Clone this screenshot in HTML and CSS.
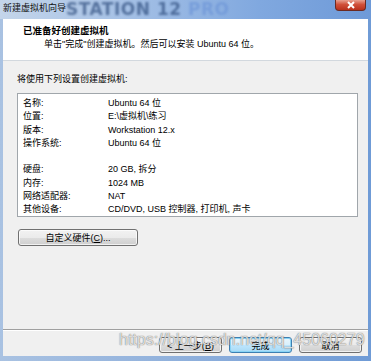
FILE: index.html
```html
<!DOCTYPE html>
<html lang="zh-CN">
<head>
<meta charset="utf-8">
<title>新建虚拟机向导</title>
<link rel="stylesheet" href="styles.css">
</head>
<body>
<div class="window">
  <div class="titlebar">
    <span class="brand"><span class="brand-dark">STATION 12</span> <span class="brand-light">PRO</span></span>
    <span class="title">新建虚拟机向导</span>
    <span class="close"><svg width="10" height="8" viewBox="0 0 10 8"><path d="M2 1 L8 7 M8 1 L2 7" stroke="#fff" stroke-width="2" fill="none"/></svg></span>
  </div>
  <div class="client">
    <div class="header">
      <div class="h-title">已准备好创建虚拟机</div>
      <div class="h-sub">单击"完成"创建虚拟机。然后可以安装 Ubuntu 64 位。</div>
    </div>
    <div class="main">
      <div class="intro">将使用下列设置创建虚拟机:</div>
      <div class="list">
        <div class="row"><span class="k">名称:</span><span class="v">Ubuntu 64 位</span></div>
        <div class="row"><span class="k">位置:</span><span class="v">E:\虚拟机\练习</span></div>
        <div class="row"><span class="k">版本:</span><span class="v">Workstation 12.x</span></div>
        <div class="row"><span class="k">操作系统:</span><span class="v">Ubuntu 64 位</span></div>
        <div class="row blank"></div>
        <div class="row"><span class="k">硬盘:</span><span class="v">20 GB, 拆分</span></div>
        <div class="row"><span class="k">内存:</span><span class="v">1024 MB</span></div>
        <div class="row"><span class="k">网络适配器:</span><span class="v">NAT</span></div>
        <div class="row"><span class="k">其他设备:</span><span class="v">CD/DVD, USB 控制器, 打印机, 声卡</span></div>
      </div>
      <button class="btn btn-custom">自定义硬件(<u>C</u>)...</button>
    </div>
    <div class="footer">
      <button class="btn">&lt; 上一步(<u>B</u>)</button>
      <button class="btn btn-default">完成</button>
      <button class="btn">取消</button>
      <span class="watermark">https://blog.csdn.net/qq_45060279</span>
    </div>
  </div>
</div>
</body>
</html>
```

FILE: styles.css
```css
* { box-sizing: border-box; }
html, body { margin: 0; padding: 0; }
body {
  width: 371px;
  height: 361px;
  overflow: hidden;
  font-family: "Liberation Sans", "Noto Sans CJK SC", sans-serif;
  font-size: 9px;
  color: #000;
}
.window {
  width: 371px;
  height: 361px;
  display: flex;
  flex-direction: column;
  background: linear-gradient(90deg, #a9c2e2 0%, #8fb0dc 50%, #6f9bd6 100%);
}
.titlebar {
  position: relative;
  height: 19px;
  flex: none;
  display: flex;
  align-items: center;
  padding-left: 3px;
  background: linear-gradient(90deg, #c4d5ea 0%, #a9c3e6 30%, #80a8df 70%, #6e9ad8 100%);
  overflow: hidden;
}
.title {
  position: relative;
  font-size: 9px;
  color: #111;
  margin-top: -5px;
}
.brand {
  position: absolute;
  left: 66px;
  top: -1px;
  font-family: "DejaVu Sans", sans-serif;
  font-weight: bold;
  font-size: 17px;
  letter-spacing: 0.5px;
  white-space: nowrap;
  filter: blur(1.2px);
}
.brand-dark { color: rgba(40, 70, 120, 0.65); }
.brand-light { color: rgba(110, 150, 215, 0.7); }
.close {
  position: absolute;
  right: 5px;
  top: 0;
  width: 31px;
  height: 11px;
  display: flex;
  align-items: center;
  justify-content: center;
  background: linear-gradient(180deg, #e8a090 0%, #d0503a 45%, #b8301c 100%);
  border: 1px solid #6b2a22;
  border-top: none;
  border-radius: 0 0 4px 4px;
}
.client {
  flex: 1;
  margin: 0 3px 5px 3px;
  background: #f0f0f0;
  display: flex;
  flex-direction: column;
}
.header {
  height: 42px;
  flex: none;
  background: #fff;
  border-bottom: 1px solid #d2d8de;
  padding: 6px 0 0 20px;
}
.h-title {
  font-weight: bold;
  font-size: 9.5px;
  line-height: 11px;
}
.h-sub {
  padding-left: 21px;
  margin-top: 3px;
  line-height: 11px;
}
.main {
  flex: 1;
  padding: 12px 10px 0 14px;
}
.intro {
  line-height: 12px;
}
.list {
  margin-top: 8px;
  width: 341px;
  height: 124px;
  border: 1px solid #a0a6ab;
  background: #fff;
  padding: 3px 0 0 5px;
}
.row {
  display: flex;
  height: 13.25px;
  line-height: 13.25px;
  white-space: nowrap;
}
.k { width: 85px; flex: none; }
.v { color: #000; }
.btn {
  font-family: inherit;
  font-size: 9px;
  color: #000;
  height: 16px;
  padding: 0;
  border: 1px solid #707070;
  border-radius: 3px;
  background: linear-gradient(180deg, #f2f2f2 0%, #ebebeb 50%, #dddddd 51%, #cfcfcf 100%);
  box-shadow: inset 0 0 0 1px rgba(255,255,255,0.7);
}
.btn-custom {
  margin-top: 12px;
  margin-left: 1px;
  width: 120px;
  height: 17px;
}
.footer {
  position: relative;
  flex: none;
  height: 27px;
  border-top: 1px solid #a0a0a0;
  box-shadow: inset 0 1px 0 #ffffff;
  display: flex;
  justify-content: flex-end;
  gap: 7px;
  padding: 7px 6px 0 0;
}
.footer .btn { width: 63px; }
.btn-default {
  border-color: #3c7fb1;
  background: linear-gradient(180deg, #eaf6fd 0%, #d9f0fc 50%, #bee6fd 51%, #a7d9f5 100%);
  box-shadow: inset 0 0 0 1px #8ad4f5;
}
.watermark {
  position: absolute;
  left: 116px;
  top: 1px;
  font-family: "Liberation Sans", sans-serif;
  font-size: 16px;
  color: rgba(255, 255, 255, 0.75);
  text-shadow: 0 0 1px rgba(90, 90, 90, 0.8), 0 0 1px rgba(90, 90, 90, 0.5);
  white-space: nowrap;
  pointer-events: none;
}
```
